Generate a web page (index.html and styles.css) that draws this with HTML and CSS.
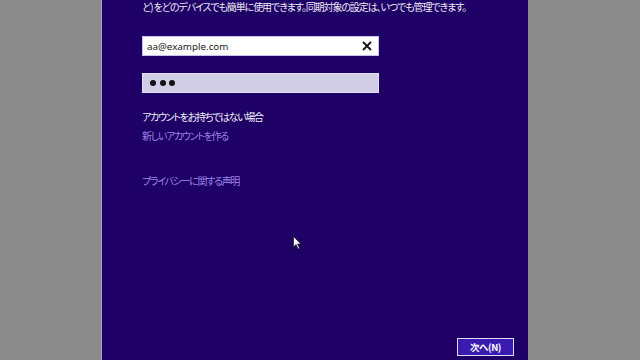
FILE: index.html
```html
<!DOCTYPE html>
<html lang="ja">
<head>
<meta charset="utf-8">
<link rel="stylesheet" href="styles.css">
</head>
<body>
<div class="screen">
  <div class="side side-left"></div>
  <main class="panel">
    <p class="intro">ど)&nbsp;をどのデバイスでも簡単に使用できます。同期対象の設定は、いつでも管理できます。</p>
    <div class="field field-email">
      <span class="field-text">aa@example.com</span>
      <svg class="clear" width="10" height="10" viewBox="0 0 10 10"><path d="M1 1 L9 9 M9 1 L1 9" stroke="#111" stroke-width="1.8" fill="none"/></svg>
    </div>
    <div class="field field-pass">
      <span class="dot"></span><span class="dot"></span><span class="dot"></span>
    </div>
    <p class="noacct">アカウントをお持ちではない場合</p>
    <a class="link link-new">新しいアカウントを作る</a>
    <a class="link link-privacy">プライバシーに関する声明</a>
    <div class="footer">
      <button class="next">次へ(N)</button>
    </div>
    <svg class="cursor" width="10" height="14" viewBox="0 0 10 14"><path d="M0.5 0.5 L0.5 11 L3 8.5 L5 13 L6.5 12.3 L4.6 8 L8 8 Z" fill="#fff" stroke="#222" stroke-width="0.8"/></svg>
  </main>
  <div class="side side-right"></div>
</div>
</body>
</html>
```
FILE: styles.css
```css
html, body {
  margin: 0;
  padding: 0;
  width: 640px;
  height: 360px;
  overflow: hidden;
}
body {
  font-family: "Noto Sans CJK JP", "Noto Sans", sans-serif;
  font-feature-settings: "palt";
}
.screen {
  display: flex;
  height: 360px;
}
.side {
  background: #8b8b8b;
}
.side-left {
  width: 101px;
  border-right: 1px solid #a9a4c8;
}
.side-right {
  flex: 1;
}
.panel {
  position: relative;
  width: 426px;
  background: #1e0066;
  padding-left: 40px;
  box-sizing: border-box;
  display: flex;
  flex-direction: column;
  align-items: flex-start;
}
.intro {
  margin: 0;
  font-size: 10px;
  letter-spacing: -1.1px;
  line-height: 14px;
  color: #ececf4;
  white-space: nowrap;
}
.field {
  box-sizing: border-box;
  width: 237px;
  height: 20px;
  display: flex;
  align-items: center;
}
.field-email {
  margin-top: 22px;
  background: #fff;
  border: 1px solid #c9bfee;
  padding: 0 4px;
  justify-content: space-between;
}
.field-text {
  font-family: "Noto Sans", sans-serif;
  font-size: 9.8px;
  color: #222;
}
.clear {
  margin-right: 2px;
}
.field-pass {
  margin-top: 17px;
  background: #d2cde6;
  border: 1px solid #e4e0f4;
  padding-left: 7px;
  gap: 3.5px;
}
.dot {
  width: 6px;
  height: 6px;
  border-radius: 50%;
  background: #111;
}
.noacct {
  margin: 17px 0 0;
  font-size: 10px;
  letter-spacing: -1.3px;
  line-height: 14px;
  color: #f0f0f6;
}
.link {
  font-size: 10px;
  letter-spacing: -1.3px;
  line-height: 14px;
  color: #9d86e8;
}
.link-new {
  margin-top: 5px;
}
.link-privacy {
  margin-top: 31px;
}
.footer {
  margin-top: auto;
  align-self: stretch;
  display: flex;
  justify-content: flex-end;
  padding-right: 14px;
  padding-bottom: 4px;
}
.next {
  width: 57px;
  height: 18px;
  padding: 0;
  background: #3a1bb2;
  border: 1.5px solid #e0dcf4;
  color: #fff;
  font-family: "Noto Sans CJK JP", sans-serif;
  font-size: 9.5px;
  font-weight: bold;
  letter-spacing: -0.5px;
  line-height: 14px;
}
.cursor {
  position: absolute;
  left: 191px;
  top: 236px;
}
```
